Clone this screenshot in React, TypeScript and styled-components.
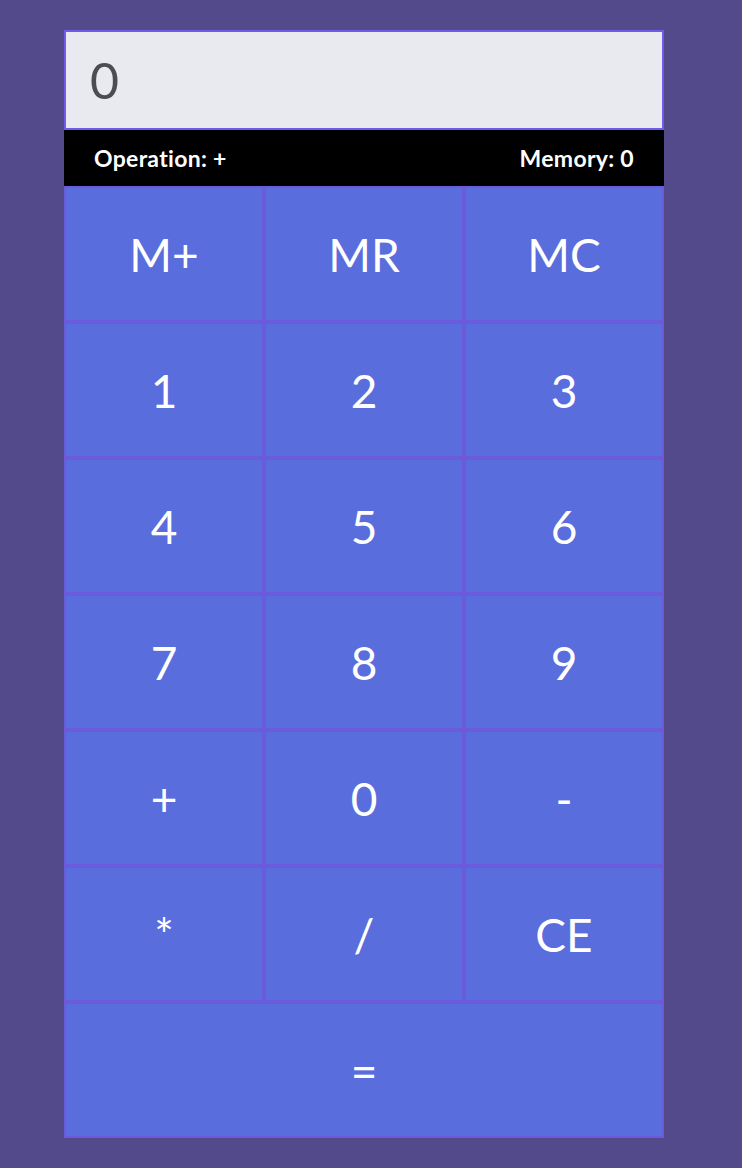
import React, { useState } from "react";
import styled, { createGlobalStyle } from "styled-components";

const GlobalStyle = createGlobalStyle`
  html, body {
    margin: 0;
    padding: 0;
    background: #534a8b;
  }
  body {
    font-family: Lato, "Open Sans", sans-serif;
  }
`;

const Page = styled.div`
  padding: 30px 0 30px 64px;
`;

const Calculator = styled.div`
  width: 600px;
  display: flex;
  flex-direction: column;
`;

const Display = styled.div`
  box-sizing: border-box;
  height: 100px;
  border: 2px solid #6c5ce7;
  background: #e9eaef;
  color: #4b4d52;
  font-family: Lato, sans-serif;
  font-size: 50px;
  line-height: 96px;
  padding-left: 24px;
`;

const StatusBar = styled.div`
  height: 56px;
  background: #000;
  color: #fff;
  display: flex;
  align-items: center;
  justify-content: space-between;
  padding: 0 30px;
  font-family: Lato, sans-serif;
  font-weight: 700;
  font-size: 23px;
  letter-spacing: 0.3px;
  font-variant-ligatures: none;
`;

const Keys = styled.div`
  display: grid;
  grid-template-columns: repeat(3, 1fr);
  grid-auto-rows: 136px;
`;

const Key = styled.button<{ $wide?: boolean }>`
  box-sizing: border-box;
  grid-column: ${(p) => (p.$wide ? "1 / span 3" : "auto")};
  border: 2px solid #6a5bdc;
  background: #596ddd;
  color: #fff;
  font-family: Lato, sans-serif;
  font-size: 46px;
  padding: 0;
  margin: 0;
  cursor: pointer;
`;

const keys = ["M+", "MR", "MC", "1", "2", "3", "4", "5", "6", "7", "8", "9", "+", "0", "-", "*", "/", "CE"];

export default function App() {
  const [value] = useState("0");
  return (
    <Page>
      <GlobalStyle />
      <Calculator>
        <Display>{value}</Display>
        <StatusBar>
          <span>Operation: +</span>
          <span>Memory: 0</span>
        </StatusBar>
        <Keys>
          {keys.map((k) => (
            <Key key={k}>{k}</Key>
          ))}
          <Key $wide>=</Key>
        </Keys>
      </Calculator>
    </Page>
  );
}
